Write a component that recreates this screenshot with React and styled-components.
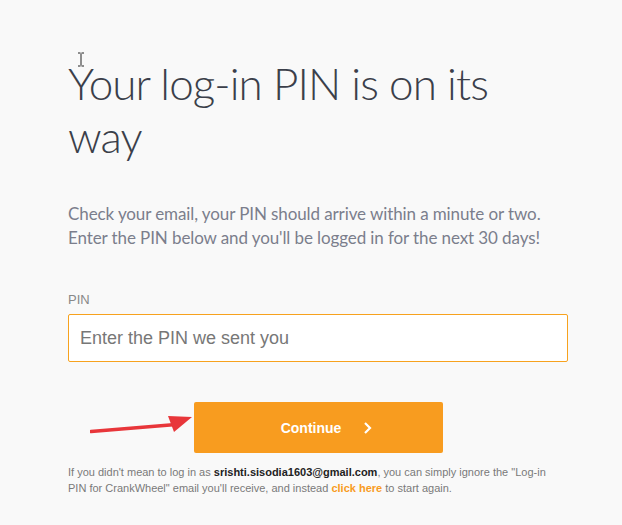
import React from 'react';
import styled, { createGlobalStyle } from 'styled-components';

const GlobalStyle = createGlobalStyle`
    body {
        margin: 0;
        background: #f9f9f9;
        font-family: "Liberation Sans", Arial, sans-serif;
    }
`;

const Page = styled.div`
    position: relative;
    width: 500px;
    padding: 57px 0 20px 68px;
`;

const Heading = styled.h1`
    margin: 0;
    font-family: Lato, "Noto Sans", sans-serif;
    font-weight: 300;
    font-size: 44px;
    line-height: 53px;
    letter-spacing: -0.9px;
    color: #3b3f4a;
`;

const Intro = styled.p`
    margin: 39px 0 0;
    font-family: Lato, "Noto Sans", sans-serif;
    font-size: 17px;
    line-height: 24px;
    letter-spacing: -0.1px;
    color: #7b7e8c;
    white-space: nowrap;
`;

const Form = styled.form`
    margin-top: 42px;
    display: flex;
    flex-direction: column;
`;

const Label = styled.label`
    font-size: 13px;
    line-height: 16px;
    color: #888;
    margin-bottom: 6px;
`;

const Input = styled.input`
    box-sizing: border-box;
    width: 100%;
    height: 48px;
    padding: 0 11px;
    border: 1px solid #f7a21e;
    border-radius: 2px;
    background: #fff;
    font-family: "Liberation Sans", Arial, sans-serif;
    font-size: 18px;
    color: #333;
    outline: none;

    &::placeholder {
        color: #777;
    }
`;

const ButtonRow = styled.div`
    position: relative;
    display: flex;
    justify-content: center;
    margin-top: 40px;
`;

const Button = styled.button`
    display: flex;
    align-items: center;
    justify-content: center;
    gap: 22px;
    width: 249px;
    height: 51px;
    padding: 0 0 0 17px;
    border: none;
    border-radius: 2px;
    background: #f89c1f;
    color: #fff;
    font-family: "Liberation Sans", Arial, sans-serif;
    font-weight: 700;
    font-size: 14px;
    cursor: pointer;
`;

const Arrow = styled.svg`
    position: absolute;
    left: 22px;
    top: 10px;
`;

const Cursor = styled.svg`
    position: absolute;
    left: 77px;
    top: 52px;
`;

const Note = styled.p`
    width: 495px;
    margin: 11px 0 0;
    font-size: 11px;
    line-height: 16px;
    color: #7a7a7a;

    b {
        color: #222;
    }

    a {
        color: #f89c1f;
        font-weight: 700;
        text-decoration: none;
    }
`;

const App = () => {
    return (
        <>
            <GlobalStyle />
            <Page>
                <Cursor width="8" height="15" viewBox="0 0 8 15">
                    <path d="M1 1h2.5M4.5 1H7M4 1.5v12M1 14h2.5M4.5 14H7" stroke="#222" strokeWidth="1" fill="none" />
                </Cursor>
                <Heading>Your log-in PIN is on its way</Heading>
                <Intro>
                    Check your email, your PIN should arrive within a minute or two.
                    <br />
                    Enter the PIN below and you'll be logged in for the next 30 days!
                </Intro>
                <Form onSubmit={(e) => e.preventDefault()}>
                    <Label htmlFor="pin">PIN</Label>
                    <Input id="pin" placeholder="Enter the PIN we sent you" />
                    <ButtonRow>
                        <Arrow width="105" height="24" viewBox="0 0 105 24">
                            <path d="M1 19.5L86 12.5" stroke="#e8363a" strokeWidth="3.5" strokeLinecap="round" />
                            <path d="M78 4L102 5L84 20Z" fill="#e8363a" />
                        </Arrow>
                        <Button type="submit">
                            Continue
                            <svg width="9" height="14" viewBox="0 0 9 14">
                                <path d="M2 2l5 5-5 5" stroke="#fff" strokeWidth="2.2" fill="none" />
                            </svg>
                        </Button>
                    </ButtonRow>
                </Form>
                <Note>
                    If you didn't mean to log in as <b>srishti.sisodia1603@gmail.com</b>, you can simply ignore the "Log-in
                    PIN for CrankWheel" email you'll receive, and instead <a href="#">click here</a> to start again.
                </Note>
            </Page>
        </>
    );
};

export default App;
